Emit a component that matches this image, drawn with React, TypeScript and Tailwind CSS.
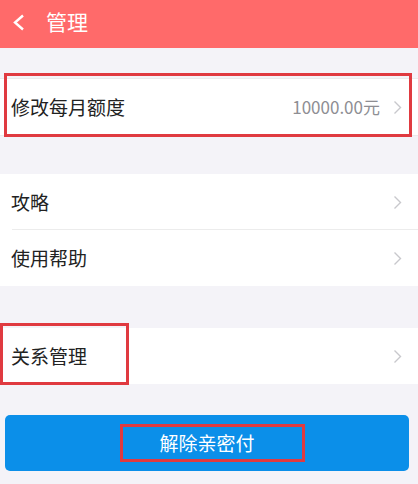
import React from 'react'

const font = { fontFamily: '"Noto Sans CJK SC", "Noto Sans", sans-serif' }

function Chevron() {
  return (
    <svg width="9" height="15" viewBox="0 0 9 15" className="shrink-0">
      <path d="M1.5 1.5 L7.5 7.5 L1.5 13.5" fill="none" stroke="#c8c8cc" strokeWidth="1.4" />
    </svg>
  )
}

function Row({ label, value, divider }: { label: string; value?: string; divider?: boolean }) {
  return (
    <div className="relative flex h-[56px] items-center pl-[11px] pr-[16px]">
      <span className="flex-1 text-[19px] text-[#222]">{label}</span>
      {value && <span className="mr-[13px] text-[17px] text-[#8e8e93]">{value}</span>}
      <Chevron />
      {divider && <div className="absolute bottom-0 left-[12px] right-0 h-px bg-[#ececec]" />}
    </div>
  )
}

export default function App() {
  return (
    <div className="h-[484px] w-[418px] overflow-hidden bg-[#f4f3f8]" style={font}>
      {/* Header */}
      <div className="flex h-[48px] items-center bg-[#ff6a6a] pb-[4px]">
        <svg width="13" height="17" viewBox="0 0 13 17" className="ml-[12px]">
          <path d="M11 1.5 L3 8.5 L11 15.5" fill="none" stroke="#fff" strokeWidth="2.4" />
        </svg>
        <span className="ml-[21px] text-[21px] text-white">管理</span>
      </div>

      {/* Monthly limit */}
      <div className="relative mt-[30px] border-y border-[#ebebeb] bg-white">
        <Row label="修改每月额度" value="10000.00元" />
        <div className="absolute -top-[6px] -bottom-[2px] left-[4px] right-[6px] border-[3px] border-[#e03a40]" />
      </div>

      {/* Guide + help */}
      <div className="mt-[38px] bg-white">
        <Row label="攻略" divider />
        <Row label="使用帮助" />
      </div>

      {/* Relation */}
      <div className="relative mt-[42px] bg-white">
        <Row label="关系管理" />
        <div className="absolute -top-[5px] left-0 h-[62px] w-[129px] border-[3px] border-[#e03a40]" />
      </div>

      {/* Button */}
      <div className="px-[5px] pr-[9px]">
        <button className="relative mt-[31px] flex h-[56px] w-full items-center justify-center rounded-[5px] bg-[#0b8fe9] text-[19px] text-white">
          解除亲密付
          <div className="absolute left-[115px] top-[9px] h-[38px] w-[185px] border-[3px] border-[#e03a40]" />
        </button>
      </div>
    </div>
  )
}
